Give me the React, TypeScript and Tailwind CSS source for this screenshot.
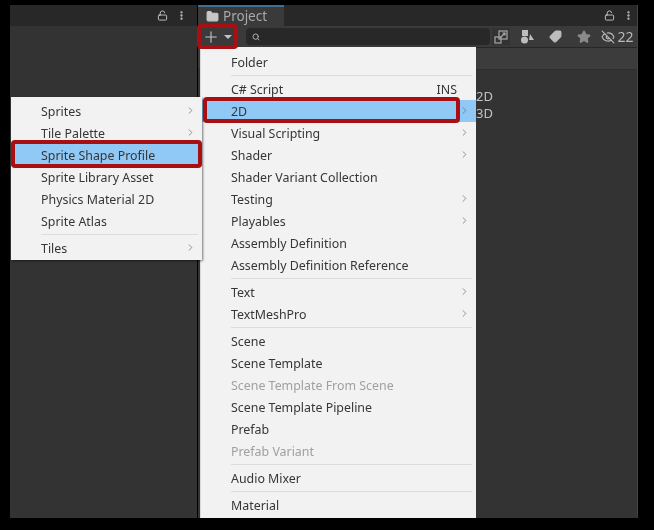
import { ChevronRight, LockOpen, Plus, Search, Star, Tag, EyeOff, MoreVertical, Folder } from "lucide-react"

type Item = { label?: string; sub?: boolean; off?: boolean; hint?: string; active?: boolean; sep?: boolean }

const mainMenu: Item[] = [
  { label: "Folder" },
  { sep: true },
  { label: "C# Script", hint: "INS" },
  { label: "2D", sub: true, active: true },
  { label: "Visual Scripting", sub: true },
  { label: "Shader", sub: true },
  { label: "Shader Variant Collection" },
  { label: "Testing", sub: true },
  { label: "Playables", sub: true },
  { label: "Assembly Definition" },
  { label: "Assembly Definition Reference" },
  { sep: true },
  { label: "Text", sub: true },
  { label: "TextMeshPro", sub: true },
  { sep: true },
  { label: "Scene" },
  { label: "Scene Template" },
  { label: "Scene Template From Scene", off: true },
  { label: "Scene Template Pipeline" },
  { label: "Prefab" },
  { label: "Prefab Variant", off: true },
  { sep: true },
  { label: "Audio Mixer" },
  { sep: true },
  { label: "Material" },
]

const subMenu: Item[] = [
  { label: "Sprites", sub: true },
  { label: "Tile Palette", sub: true },
  { label: "Sprite Shape Profile", active: true },
  { label: "Sprite Library Asset" },
  { label: "Physics Material 2D" },
  { label: "Sprite Atlas" },
  { sep: true },
  { label: "Tiles", sub: true },
]

function MenuRows({ items, indent }: { items: Item[]; indent: string }) {
  return (
    <>
      {items.map((item, i) =>
        item.sep ? (
          <div key={i} className={`h-[5px] flex items-center pr-1 ${indent}`}>
            <div className="h-px w-full bg-[#dcdcdc]" />
          </div>
        ) : (
          <div
            key={i}
            className={`h-[22px] flex items-center pr-1.5 text-[12.4px] ${indent} ${item.active ? "bg-[#90c8f6]" : ""} ${
              item.off ? "text-[#a0a0a0]" : "text-[#363636]"
            }`}
          >
            <span className="flex-1 pt-0.5">{item.label}</span>
            {item.hint && <span className="pt-0.5 pr-[13px]">{item.hint}</span>}
            {item.sub && <ChevronRight size={11} strokeWidth={1.5} className="text-[#666] -mt-0.5" />}
          </div>
        )
      )}
    </>
  )
}

function ToolButton({ children }: { children: React.ReactNode }) {
  return <div className="w-[27px] h-[21px] flex items-center justify-center bg-[#3a3a3a]">{children}</div>
}

export default function App() {
  return (
    <div className="relative w-[654px] h-[530px] bg-black overflow-hidden font-['Noto_Sans',sans-serif] blur-[0.4px]">
      <div className="flex h-full pt-[5px] pb-3 pl-2.5 pr-4">
        {/* Left panel */}
        <div className="w-[187px] flex flex-col bg-[#2f2f2f]">
          <div className="h-[21px] bg-[#282828] flex items-center justify-end gap-2 pr-2.5 text-[#c8c8c8]">
            <LockOpen size={11} />
            <MoreVertical size={11} strokeWidth={3} />
          </div>
          <div className="flex-1 bg-[#333333]" />
        </div>

        {/* Project panel */}
        <div className="flex-1 ml-px flex flex-col bg-[#333333] border-r border-[#444444]">
          <div className="h-[21px] bg-[#282828] flex justify-between">
            <div className="w-[86px] h-full bg-[#3a3a3a] border-t-2 border-[#3f6d94] flex items-center gap-1 pl-2 text-[13.5px] leading-none text-[#a8a8a8]">
              <Folder size={13} fill="#c8c8c8" className="text-[#c8c8c8]" />
              Project
            </div>
            <div className="flex items-center gap-2 pr-[3px] text-[#c8c8c8]">
              <LockOpen size={11} />
              <MoreVertical size={11} strokeWidth={3} />
            </div>
          </div>

          <div className="h-[22px] bg-[#3a3a3a] border-b border-[#262626] flex items-center">
            <div className="w-10 h-full flex items-center pl-1 gap-1 text-[#c4c4c4]">
              <Plus size={18} strokeWidth={1.5} />
              <div className="w-0 h-0 border-x-[4px] border-x-transparent border-t-[4px] border-t-[#c4c4c4]" />
            </div>
            <div className="ml-[8px] w-[244px] h-[17px] rounded bg-[#282828] flex items-center pl-1.5 text-[#b0b0b0]">
              <Search size={8} strokeWidth={3} />
            </div>
            <div className="ml-0.5 w-[18px] h-[17px] bg-[#333333] flex items-center justify-center text-[#a8a8a8]">
              <svg width="14" height="14" viewBox="0 0 14 14" fill="none" stroke="currentColor" strokeWidth="1.2">
                <rect x="5" y="1" width="8" height="8" />
                <rect x="1" y="7" width="6" height="6" />
                <path d="M7 7l4-4M8.5 3H11v2.5" />
              </svg>
            </div>
            <div className="ml-1 flex gap-px text-[#bdbdbd]">
              <ToolButton>
                <svg width="15" height="15" viewBox="0 0 15 15" fill="currentColor">
                  <rect x="2" y="1" width="6" height="6" />
                  <circle cx="4.5" cy="11" r="3.5" />
                  <path d="M10 5l4 6H9z" />
                </svg>
              </ToolButton>
              <ToolButton>
                <Tag size={13} fill="currentColor" className="rotate-90" />
              </ToolButton>
              <ToolButton>
                <Star size={14} fill="#8a8a8a" className="text-[#8a8a8a]" />
              </ToolButton>
            </div>
            <div className="ml-px h-[21px] flex-1 bg-[#3a3a3a] flex items-center justify-center gap-0.5 text-[14px] text-[#b8b8b8]">
              <EyeOff size={14} />
              22
            </div>
          </div>

          <div className="h-[22px] bg-[#3c3c3c] border-b border-[#2e2e2e]" />

          <div className="pl-[278px] pt-[18px] text-[13px] leading-[17px] text-[#c2c2c2]">
            <div>2D</div>
            <div>3D</div>
          </div>
        </div>
      </div>

      {/* Create menu */}
      <div className="absolute left-[200px] top-[47px] w-[276px] h-[471px] bg-[#f2f2f2] pt-1 overflow-hidden border-l border-[#d8d8d8]">
        <MenuRows items={mainMenu} indent="pl-[30px]" />
      </div>

      {/* 2D submenu */}
      <div className="absolute left-[11px] top-[97px] w-[191px] h-[163px] bg-[#f2f2f2] pt-[3px] shadow-[1px_1px_2px_rgba(0,0,0,0.5)]">
        <MenuRows items={subMenu} indent="pl-[30px]" />
      </div>

      {/* Red tutorial highlights */}
      <div className="absolute left-[197px] top-6 w-[41px] h-[25px] border-4 border-[#a80f12] rounded-sm" />
      <div className="absolute left-[203px] top-[97px] w-[257px] h-[26px] border-4 border-[#a80f12] rounded-sm" />
      <div className="absolute left-[11px] top-[140px] w-[191px] h-[28px] border-4 border-[#a80f12] rounded-sm" />
    </div>
  )
}
